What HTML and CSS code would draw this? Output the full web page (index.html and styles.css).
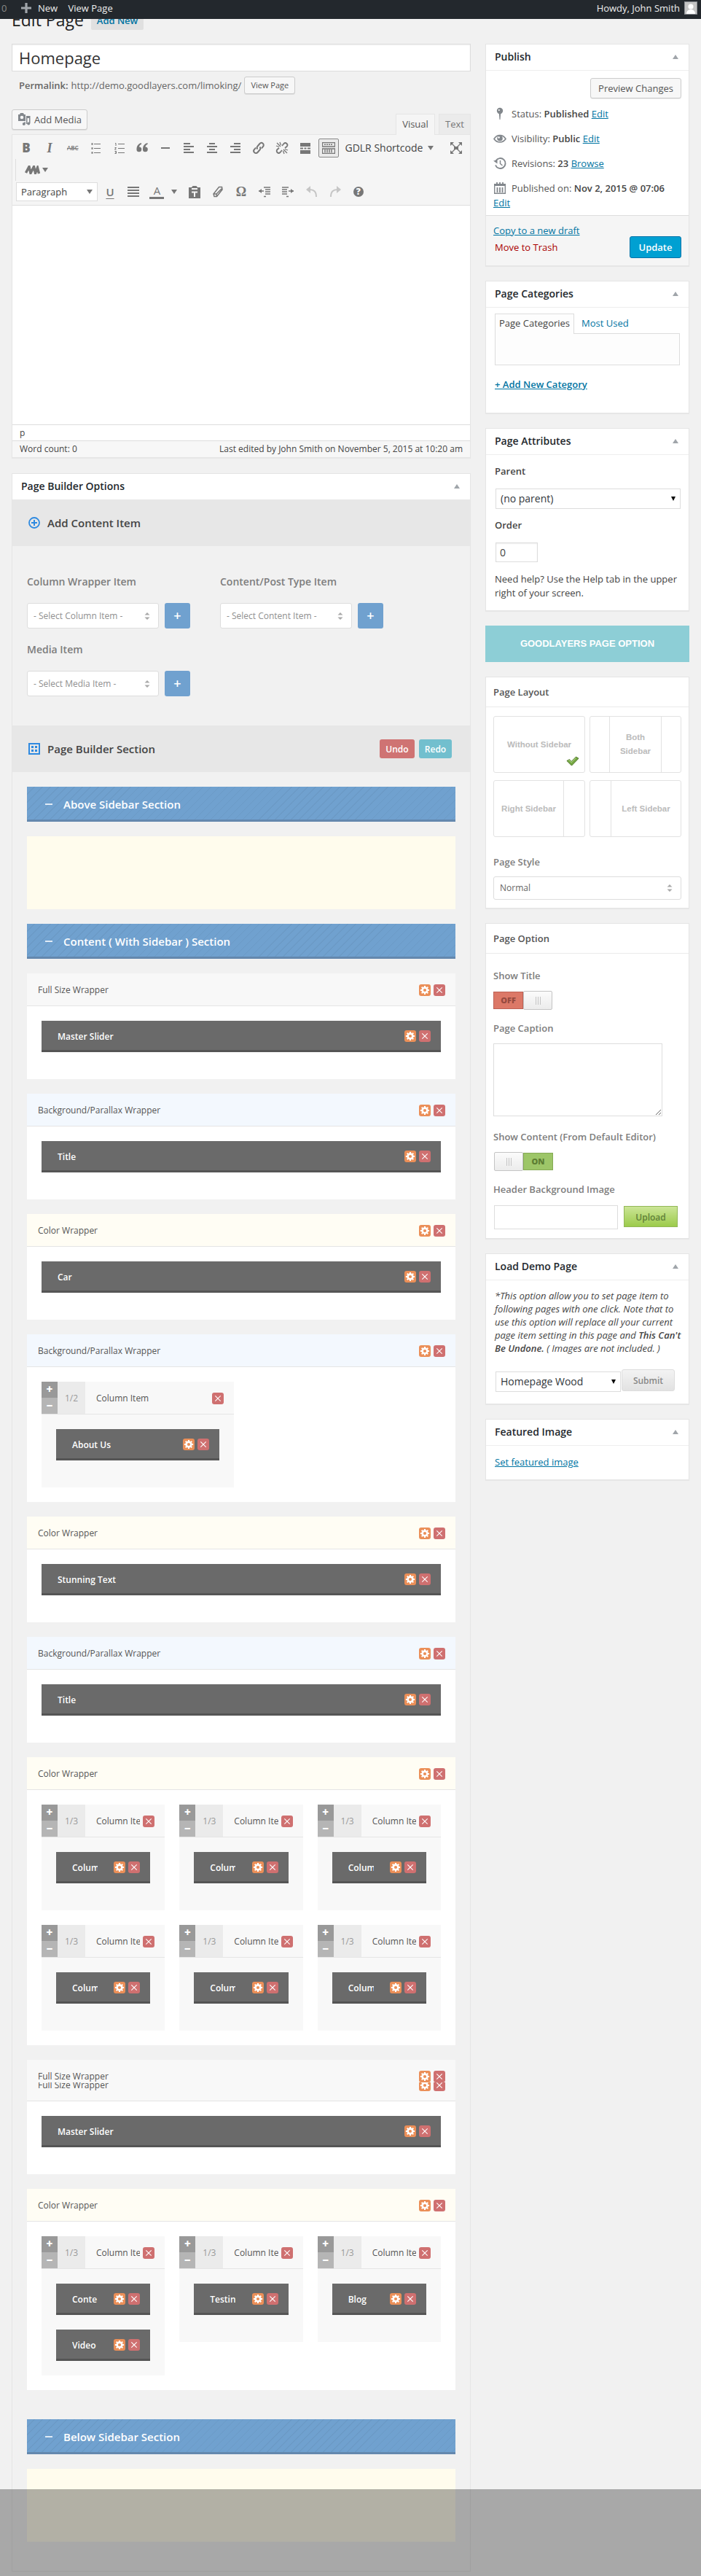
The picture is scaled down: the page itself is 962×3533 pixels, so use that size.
FILE: index.html
```html
<!DOCTYPE html>
<html lang="en">
<head>
    <meta charset="UTF-8">
    <meta name="viewport" content="width=device-width, initial-scale=1.0">
    <title>Edit Page</title>
    <link rel="stylesheet" href="styles.css">
</head>
<body>

    <svg class="sprite">
        <symbol id="gear" viewBox="0 0 16 16">
            <circle cx="8" cy="8" r="3.4" fill="none" stroke="#fff" stroke-width="2.6"/>
            <path d="M8 1.900v2M8 12.100v2M1.900 8h2M12.100 8h2M3.700 3.700l1.400 1.400M10.900 10.900l1.400 1.400M3.700 12.300l1.400-1.400M10.900 5.100l1.400-1.400" stroke="#fff" stroke-width="2"/>
        </symbol>
        <symbol id="cross" viewBox="0 0 16 16">
            <path d="M4.300 4.300l7.400 7.400M11.700 4.300l-7.400 7.400" stroke="#fff" stroke-width="1.100"/>
        </symbol>
        <symbol id="updown" viewBox="0 0 8 14">
            <path d="M0.500 5.500L4 2l3.500 3.500zM0.500 8.500h7L4 12z" fill="#a9a9a9"/>
        </symbol>
    </svg>

    <div class="adminbar">
        <span class="count">0</span>
        <svg class="plus-icon" width="14" height="14" viewBox="0 0 14 14"><path d="M7 0v14M0 7h14" stroke="#a0a5aa" stroke-width="3.200"/></svg>
        <span class="new">New</span>
        <span>View Page</span>
        <span class="howdy">Howdy, John Smith</span>
        <svg class="avatar" width="18" height="18" viewBox="0 0 18 18"><rect x=".5" y=".5" width="17" height="17" fill="#c4c4c4" stroke="#8c8f94"/><circle cx="9" cy="7" r="3.600" fill="#fff"/><path d="M3 17c0-4 3-6 6-6s6 2 6 6z" fill="#fff"/></svg>
    </div>

    <div class="page-heading">
        <h1>Edit Page</h1>
        <a class="add-new">Add New</a>
    </div>

    <div class="columns">
        <div class="main">
            <div class="title-input">Homepage</div>
            <div class="permalink">
                <b>Permalink:</b><span>http://demo.goodlayers.com/limoking/</span>
                <span class="btn btn-small">View Page</span>
            </div>

            <div class="editor-tools">
                <span class="btn btn-media">
                    <svg width="18" height="18" viewBox="0 0 18 18" fill="#82878c"><path d="M1 2h2l1-2h4l1 2h2v9H1z"/><circle cx="6" cy="6" r="2.300" fill="#f7f7f7"/><path d="M12 4h5.500v10h-1.500V7h-2.500v8H12z"/><circle cx="8.800" cy="15" r="2"/><circle cx="15.200" cy="14.500" r="2"/><path d="M9.500 12h1.300v3H9.500z"/></svg>
                    Add Media
                </span>
                <span class="tab active">Visual</span>
                <span class="tab">Text</span>
            </div>

            <div class="editor">
                <div class="toolbar">
                    <div class="tool-row">
                        <span class="tool"><b class="bold">B</b></span>
                        <span class="tool"><b class="ital">I</b></span>
                        <span class="tool"><s class="strike">ABC</s></span>
                        <span class="tool"><svg width="16" height="16" viewBox="0 0 16 16" stroke="#777"><path d="M5 2.500h9M5 8.500h9M5 14.500h9" /><path d="M1.500 2.500h2M1.500 8.500h2M1.500 14.500h2" stroke-width="2.500"/></svg></span>
                        <span class="tool"><svg width="16" height="16" viewBox="0 0 16 16" stroke="#777" fill="none"><path d="M6 2.500h9M6 8.500h9M6 14.500h9M2 1.500h1V5M1.500 7.500h2l-2 2.500h2M1.500 12.500h2v3h-2M2 14h1.500"/></svg></span>
                        <span class="tool"><svg width="16" height="14" viewBox="0 0 16 14" fill="#777"><path d="M7 0C3 1 .5 4 .5 8.500a3.400 3.400 0 1 0 3.500-3C4 4 5 2.500 7 2zM15.500 0C11.500 1 9 4 9 8.500a3.400 3.400 0 1 0 3.500-3c0-1.500 1-3 3-3.500z"/></svg></span>
                        <span class="tool"><svg width="14" height="14" viewBox="0 0 14 14" stroke="#777" stroke-width="2"><path d="M1 7h12"/></svg></span>
                        <span class="tool"><svg width="14" height="16" viewBox="0 0 14 16" stroke="#777" stroke-width="2"><path d="M0 2h9M0 6h14M0 10h9M0 14h14"/></svg></span>
                        <span class="tool"><svg width="14" height="16" viewBox="0 0 14 16" stroke="#777" stroke-width="2"><path d="M3 2h8M0 6h14M3 10h8M0 14h14"/></svg></span>
                        <span class="tool"><svg width="14" height="16" viewBox="0 0 14 16" stroke="#777" stroke-width="2"><path d="M5 2h9M0 6h14M5 10h9M0 14h14"/></svg></span>
                        <span class="tool"><svg width="18" height="18" viewBox="0 0 18 18" fill="none" stroke="#777" stroke-width="2"><path d="M7.500 10.500a2.800 2.800 0 0 1 0-4l3-3.500a2.800 2.800 0 0 1 4.500 4l-2 2.500M10.500 7.500a2.800 2.800 0 0 1 0 4l-3 3.500a2.800 2.800 0 0 1-4.500-4l2-2.500"/></svg></span>
                        <span class="tool"><svg width="18" height="18" viewBox="0 0 18 18" fill="none" stroke="#777" stroke-width="1.800"><path d="M9 6l2.500-3a2.600 2.600 0 0 1 4 4L13 9M9 12l-2.500 3a2.600 2.600 0 0 1-4-4L5 9"/><path d="M2 2l5 5M6 1l1.500 4M1 6l4 1.500M16 16l-5-5M12 17l-1.500-4M17 12l-4-1.500" stroke-width="1.300"/></svg></span>
                        <span class="tool"><svg width="14" height="15" viewBox="0 0 14 15" fill="#777"><path d="M0 0h14v5H0zM0 10h14v5H0zM0 6.500h4v2H0zM5.500 6.500h3v2h-3zM10 6.500h4v2h-4z"/></svg></span>
                        <span class="tool tool-on"><svg width="18" height="16" viewBox="0 0 18 16" fill="none" stroke="#777"><path d="M.5.500h17v5.500H.500zM.500 9h17v6.500H.500z" stroke-width="1.300"/><path d="M3 3.300h12M3 11h12M3 13.300h12" stroke-width="1.600" stroke-dasharray="2 1"/></svg></span>
                        <span class="shortcode">GDLR Shortcode <i class="down"></i></span>
                        <span class="tool expand"><svg width="16" height="16" viewBox="0 0 16 16" fill="#777"><path d="M0 0h5L0 5zM16 0v5l-5-5zM0 16v-5l5 5zM16 16h-5l5-5zM5 6h6v4H5z"/><path d="M2 2l12 12M14 2L2 14" stroke="#777" stroke-width="1.300"/></svg></span>
                    </div>
                    <div class="tool-row row-group">
                        <svg width="21" height="12" viewBox="0 0 21 12" fill="none" stroke="#777" stroke-width="3.400"><path d="M1.500 10L6 1.500 8 10.500 12.500 1.500 14.500 10.500 17.500 3 19.500 11"/></svg>
                        <i class="down"></i>
                    </div>
                    <div class="tool-row row-last">
                        <span class="format">Paragraph <i class="down"></i></span>
                        <span class="tool"><u class="under">U</u></span>
                        <span class="tool"><svg width="16" height="14" viewBox="0 0 16 14" stroke="#777" stroke-width="2"><path d="M0 1h16M0 5h16M0 9h16M0 13h16"/></svg></span>
                        <span class="tool color"><span>A</span></span>
                        <span class="tool caret"><i class="down"></i></span>
                        <span class="tool"><svg width="16" height="17" viewBox="0 0 16 17" fill="#777"><path d="M0 2h4l1.500-2h5L12 2h4v15H0z"/><path d="M4 4h8M4 8.500h8M8 8.500V15" stroke="#f5f5f5" stroke-width="2"/></svg></span>
                        <span class="tool"><svg width="16" height="16" viewBox="0 0 16 16" fill="none" stroke="#777" stroke-width="1.500"><path d="M2 11L9.500 1.500h4l.5 3.500L6.500 14.500H3zM2 11h4l.5 3.500M6 11l8-8"/></svg></span>
                        <span class="tool omega">Ω</span>
                        <span class="tool"><svg width="16" height="15" viewBox="0 0 16 15" stroke="#777" stroke-width="1.700"><path d="M7 1h9M9 4h7M9 7h7M9 10h7M7 13.500h3M0 6h7"/><path d="M4 3v6L0 6z" fill="#777" stroke="none"/></svg></span>
                        <span class="tool"><svg width="16" height="15" viewBox="0 0 16 15" stroke="#777" stroke-width="1.700"><path d="M0 1h9M0 4h7M0 7h7M0 10h7M6 13.500h3M9 6h7"/><path d="M12 3v6l4-3z" fill="#777" stroke="none"/></svg></span>
                        <span class="tool"><svg width="16" height="16" viewBox="0 0 16 16" fill="none" stroke="#c6c6c6" stroke-width="2"><path d="M4 5c7-.5 10 3 10 10"/><path d="M0 5l6-5v10z" fill="#c6c6c6" stroke="none"/></svg></span>
                        <span class="tool"><svg width="16" height="16" viewBox="0 0 16 16" fill="none" stroke="#c6c6c6" stroke-width="2"><path d="M12 5C5 4.500 2 8 2 15"/><path d="M16 5l-6-5v10z" fill="#c6c6c6" stroke="none"/></svg></span>
                        <span class="tool"><b class="help">?</b></span>
                    </div>
                </div>
                <div class="edit-area"></div>
                <div class="edit-path">p</div>
                <div class="edit-status"><span>Word count: 0</span><span>Last edited by John Smith on November 5, 2015 at 10:20 am</span></div>
            </div>

            <div class="builder">
                <div class="builder-head">Page Builder Options <i class="up"></i></div>
                <div class="band">
                    <svg width="16" height="16" viewBox="0 0 16 16" fill="none" stroke="#2f8ae0" stroke-width="1.800"><circle cx="8" cy="8" r="7"/><path d="M8 4v8M4 8h8" stroke-width="2"/></svg>
                    <span>Add Content Item</span>
                </div>
                <div class="add-items">
                    <div class="add-item">
                        <h4>Column Wrapper Item</h4>
                        <div class="add-row"><span class="combo">- Select Column Item -<svg width="8" height="14"><use href="#updown"/></svg></span><span class="add-btn">+</span></div>
                    </div>
                    <div class="add-item">
                        <h4>Content/Post Type Item</h4>
                        <div class="add-row"><span class="combo">- Select Content Item -<svg width="8" height="14"><use href="#updown"/></svg></span><span class="add-btn">+</span></div>
                    </div>
                    <div class="add-item">
                        <h4>Media Item</h4>
                        <div class="add-row"><span class="combo">- Select Media Item -<svg width="8" height="14"><use href="#updown"/></svg></span><span class="add-btn">+</span></div>
                    </div>
                </div>
                <div class="band">
                    <svg width="16" height="16" viewBox="0 0 16 16" fill="none" stroke="#2f8ae0" stroke-width="2"><path d="M1 1h14v14H1z"/><path d="M4 5.500h3M9 5.500h3M4 10.500h3M9 10.500h3" stroke-width="3"/></svg>
                    <span>Page Builder Section</span>
                    <span class="undo">Undo</span><span class="redo">Redo</span>
                </div>

                <div class="sections">
                    <div class="section-bar"><i></i>Above Sidebar Section</div>
                    <div class="drop-area"></div>
                    <div class="section-bar"><i></i>Content ( With Sidebar ) Section</div>

                    <div class="wrapper">
                        <div class="w-head"><span>Full Size Wrapper</span><svg class="ic gear"><use href="#gear"/></svg><svg class="ic del"><use href="#cross"/></svg></div>
                        <div class="w-body"><div class="item"><b>Master Slider</b><svg class="ic gear"><use href="#gear"/></svg><svg class="ic del"><use href="#cross"/></svg></div></div>
                    </div>
                    <div class="wrapper parallax">
                        <div class="w-head"><span>Background/Parallax Wrapper</span><svg class="ic gear"><use href="#gear"/></svg><svg class="ic del"><use href="#cross"/></svg></div>
                        <div class="w-body"><div class="item"><b>Title</b><svg class="ic gear"><use href="#gear"/></svg><svg class="ic del"><use href="#cross"/></svg></div></div>
                    </div>
                    <div class="wrapper color-w">
                        <div class="w-head"><span>Color Wrapper</span><svg class="ic gear"><use href="#gear"/></svg><svg class="ic del"><use href="#cross"/></svg></div>
                        <div class="w-body"><div class="item"><b>Car</b><svg class="ic gear"><use href="#gear"/></svg><svg class="ic del"><use href="#cross"/></svg></div></div>
                    </div>
                    <div class="wrapper parallax">
                        <div class="w-head"><span>Background/Parallax Wrapper</span><svg class="ic gear"><use href="#gear"/></svg><svg class="ic del"><use href="#cross"/></svg></div>
                        <div class="w-body halves">
                            <div class="col">
                                <div class="col-head"><div class="sizer"><i>+</i><i>−</i></div><em>1/2</em><span>Column Item</span><svg class="ic del"><use href="#cross"/></svg></div>
                                <div class="col-body"><div class="item"><b>About Us</b><svg class="ic gear"><use href="#gear"/></svg><svg class="ic del"><use href="#cross"/></svg></div></div>
                            </div>
                        </div>
                    </div>
                    <div class="wrapper color-w">
                        <div class="w-head"><span>Color Wrapper</span><svg class="ic gear"><use href="#gear"/></svg><svg class="ic del"><use href="#cross"/></svg></div>
                        <div class="w-body"><div class="item"><b>Stunning Text</b><svg class="ic gear"><use href="#gear"/></svg><svg class="ic del"><use href="#cross"/></svg></div></div>
                    </div>
                    <div class="wrapper parallax">
                        <div class="w-head"><span>Background/Parallax Wrapper</span><svg class="ic gear"><use href="#gear"/></svg><svg class="ic del"><use href="#cross"/></svg></div>
                        <div class="w-body"><div class="item"><b>Title</b><svg class="ic gear"><use href="#gear"/></svg><svg class="ic del"><use href="#cross"/></svg></div></div>
                    </div>
                    <div class="wrapper color-w">
                        <div class="w-head"><span>Color Wrapper</span><svg class="ic gear"><use href="#gear"/></svg><svg class="ic del"><use href="#cross"/></svg></div>
                        <div class="w-body thirds">
                            <div class="col">
                                <div class="col-head"><div class="sizer"><i>+</i><i>−</i></div><em>1/3</em><span>Column Item</span><svg class="ic del"><use href="#cross"/></svg></div>
                                <div class="col-body"><div class="item"><b>Column</b><svg class="ic gear"><use href="#gear"/></svg><svg class="ic del"><use href="#cross"/></svg></div></div>
                            </div>
                            <div class="col">
                                <div class="col-head"><div class="sizer"><i>+</i><i>−</i></div><em>1/3</em><span>Column Item</span><svg class="ic del"><use href="#cross"/></svg></div>
                                <div class="col-body"><div class="item"><b>Column</b><svg class="ic gear"><use href="#gear"/></svg><svg class="ic del"><use href="#cross"/></svg></div></div>
                            </div>
                            <div class="col">
                                <div class="col-head"><div class="sizer"><i>+</i><i>−</i></div><em>1/3</em><span>Column Item</span><svg class="ic del"><use href="#cross"/></svg></div>
                                <div class="col-body"><div class="item"><b>Column</b><svg class="ic gear"><use href="#gear"/></svg><svg class="ic del"><use href="#cross"/></svg></div></div>
                            </div>
                            <div class="col">
                                <div class="col-head"><div class="sizer"><i>+</i><i>−</i></div><em>1/3</em><span>Column Item</span><svg class="ic del"><use href="#cross"/></svg></div>
                                <div class="col-body"><div class="item"><b>Column</b><svg class="ic gear"><use href="#gear"/></svg><svg class="ic del"><use href="#cross"/></svg></div></div>
                            </div>
                            <div class="col">
                                <div class="col-head"><div class="sizer"><i>+</i><i>−</i></div><em>1/3</em><span>Column Item</span><svg class="ic del"><use href="#cross"/></svg></div>
                                <div class="col-body"><div class="item"><b>Column</b><svg class="ic gear"><use href="#gear"/></svg><svg class="ic del"><use href="#cross"/></svg></div></div>
                            </div>
                            <div class="col">
                                <div class="col-head"><div class="sizer"><i>+</i><i>−</i></div><em>1/3</em><span>Column Item</span><svg class="ic del"><use href="#cross"/></svg></div>
                                <div class="col-body"><div class="item"><b>Column</b><svg class="ic gear"><use href="#gear"/></svg><svg class="ic del"><use href="#cross"/></svg></div></div>
                            </div>
                        </div>
                    </div>
                    <div class="wrapper">
                        <div class="w-head w-cut"><span>Full Size Wrapper</span><svg class="ic gear"><use href="#gear"/></svg><svg class="ic del"><use href="#cross"/></svg></div>
                        <div class="w-head w-rest"><span>Full Size Wrapper</span><svg class="ic gear"><use href="#gear"/></svg><svg class="ic del"><use href="#cross"/></svg></div>
                        <div class="w-body"><div class="item"><b>Master Slider</b><svg class="ic gear"><use href="#gear"/></svg><svg class="ic del"><use href="#cross"/></svg></div></div>
                    </div>
                    <div class="wrapper color-w">
                        <div class="w-head"><span>Color Wrapper</span><svg class="ic gear"><use href="#gear"/></svg><svg class="ic del"><use href="#cross"/></svg></div>
                        <div class="w-body thirds">
                            <div class="col">
                                <div class="col-head"><div class="sizer"><i>+</i><i>−</i></div><em>1/3</em><span>Column Item</span><svg class="ic del"><use href="#cross"/></svg></div>
                                <div class="col-body">
                                    <div class="item"><b>Conte</b><svg class="ic gear"><use href="#gear"/></svg><svg class="ic del"><use href="#cross"/></svg></div>
                                    <div class="item"><b>Video</b><svg class="ic gear"><use href="#gear"/></svg><svg class="ic del"><use href="#cross"/></svg></div>
                                </div>
                            </div>
                            <div class="col">
                                <div class="col-head"><div class="sizer"><i>+</i><i>−</i></div><em>1/3</em><span>Column Item</span><svg class="ic del"><use href="#cross"/></svg></div>
                                <div class="col-body"><div class="item"><b>Testin</b><svg class="ic gear"><use href="#gear"/></svg><svg class="ic del"><use href="#cross"/></svg></div></div>
                            </div>
                            <div class="col">
                                <div class="col-head"><div class="sizer"><i>+</i><i>−</i></div><em>1/3</em><span>Column Item</span><svg class="ic del"><use href="#cross"/></svg></div>
                                <div class="col-body"><div class="item"><b>Blog</b><svg class="ic gear"><use href="#gear"/></svg><svg class="ic del"><use href="#cross"/></svg></div></div>
                            </div>
                        </div>
                    </div>
                    <div class="section-bar last"><i></i>Below Sidebar Section</div>
                    <div class="drop-area"></div>
                </div>
            </div>
        </div>

        <div class="side">
            <div class="box publish">
                <h2>Publish <i class="up"></i></h2>
                <div class="preview"><span class="btn">Preview Changes</span></div>
                <div class="misc">
                    <svg width="18" height="18" viewBox="0 0 18 18" fill="#82878c"><circle cx="9" cy="5" r="4.200"/><path d="M7.800 8h2.400L9.500 17h-1z"/><circle cx="7.800" cy="4" r="1" fill="#fff"/></svg>
                    <span>Status: <b>Published</b> <a>Edit</a></span>
                </div>
                <div class="misc">
                    <svg width="18" height="18" viewBox="0 0 18 18" fill="none" stroke="#82878c" stroke-width="1.600"><path d="M1 9.500c4-6.500 12-6.500 16 0-4 6-12 6-16 0z"/><circle cx="9" cy="8.800" r="3.800" fill="#82878c" stroke="none"/><circle cx="7.600" cy="7.500" r="1.300" fill="#fff" stroke="none"/></svg>
                    <span>Visibility: <b>Public</b> <a>Edit</a></span>
                </div>
                <div class="misc">
                    <svg width="18" height="18" viewBox="0 0 18 18" fill="none" stroke="#82878c" stroke-width="1.900"><path d="M3.500 5.500a7 7 0 1 1-.5 6"/><path d="M9.500 5v4.500l3 2.500" stroke-width="1.500"/><path d="M0 5.500l5.500-1v5z" fill="#82878c" stroke="none"/></svg>
                    <span>Revisions: <b>23</b> <a>Browse</a></span>
                </div>
                <div class="misc wide">
                    <svg width="18" height="18" viewBox="0 0 18 18" fill="none" stroke="#82878c" stroke-width="1.400"><path d="M1.700 3.700h14.600v12.600H1.700z"/><path d="M1 4.500h16" stroke-width="3"/><path d="M5.500 8v7M9 8v7M12.500 8v7M5 1v4M9 1v4M13 1v4" stroke-width="1.800"/></svg>
                    <span>Published on: <b>Nov 2, 2015 @ 07:06</b></span>
                </div>
                <div class="misc-edit"><a>Edit</a></div>
                <div class="actions">
                    <div><a>Copy to a new draft</a><span class="trash">Move to Trash</span></div>
                    <span class="update">Update</span>
                </div>
            </div>

            <div class="box cats">
                <h2>Page Categories <i class="up"></i></h2>
                <div class="cat-tabs"><span class="cat-on">Page Categories</span><span class="cat-off">Most Used</span></div>
                <div class="cat-list"></div>
                <a class="add-cat">+ Add New Category</a>
            </div>

            <div class="box attrs">
                <h2>Page Attributes <i class="up"></i></h2>
                <b>Parent</b>
                <div class="select">(no parent) <i class="down"></i></div>
                <b>Order</b>
                <div class="order">0</div>
                <p>Need help? Use the Help tab in the upper right of your screen.</p>
            </div>

            <div class="banner">GOODLAYERS PAGE OPTION</div>

            <div class="box layout">
                <h3>Page Layout</h3>
                <div class="layouts">
                    <div class="lay"><span>Without Sidebar</span>
                        <svg class="check" width="18" height="14" viewBox="0 0 18 14"><path d="M1 6.500l3.500-2L7 7.500 13.500 1 17 3.200 7.500 13z" fill="#76a843" stroke="#4b7426"/><path d="M3 6.200l1.400-.8L7 8.700 13.600 2.200" fill="none" stroke="#b5d88e"/></svg>
                    </div>
                    <div class="lay both"><i></i><span>Both<br>Sidebar</span><i></i></div>
                    <div class="lay right"><span>Right Sidebar</span><i></i></div>
                    <div class="lay left"><i></i><span>Left Sidebar</span></div>
                </div>
                <h4>Page Style</h4>
                <div class="combo">Normal<svg width="8" height="14"><use href="#updown"/></svg></div>
            </div>

            <div class="box option">
                <h3>Page Option</h3>
                <h4 class="o-title">Show Title</h4>
                <div class="switch"><b class="off">OFF</b><i><u></u></i></div>
                <h4 class="o-caption">Page Caption</h4>
                <textarea class="caption"></textarea>
                <h4 class="o-content">Show Content (From Default Editor)</h4>
                <div class="switch sw-on"><i><u></u></i><b class="on">ON</b></div>
                <h4 class="o-header">Header Background Image</h4>
                <div class="upload-row"><span class="upload-input"></span><span class="upload">Upload</span></div>
            </div>

            <div class="box demo">
                <h2>Load Demo Page <i class="up"></i></h2>
                <p>*This option allow you to set page item to<br>following pages with one click. Note that to<br>use this option will replace all your current<br>page item setting in this page and <b>This Can't<br>Be Undone.</b> ( Images are not included. )</p>
                <div class="demo-row"><div class="select">Homepage Wood <i class="down"></i></div><span class="submit">Submit</span></div>
            </div>

            <div class="box featured">
                <h2>Featured Image <i class="up"></i></h2>
                <a>Set featured image</a>
            </div>
        </div>
    </div>
    <div class="shade"></div>

</body>
</html>
```
FILE: styles.css
```css
* {
    margin: 0;
    padding: 0;
    box-sizing: border-box;
}
body {
    position: relative;
    width: 962px;
    height: 3533px;
    overflow: hidden;
    background: #f1f1f1;
    font-family: 'Open Sans', sans-serif;
    font-size: 13px;
    line-height: 18px;
    color: #444;
}
.sprite {
    display: none;
}
b {
    font-weight: 600;
}
i, em {
    font-style: normal;
}
svg {
    flex: none;
}
a {
    color: #0074a2;
    text-decoration: underline;
}
.up {
    width: 0;
    height: 0;
    border: 4px solid transparent;
    border-top: 0;
    border-bottom: 6px solid #a0a5aa;
}
.down {
    width: 0;
    height: 0;
    border: 4px solid transparent;
    border-bottom: 0;
    border-top: 6px solid #777;
}

/* admin bar */
.adminbar {
    display: flex;
    align-items: center;
    height: 26px;
    padding: 0 5px 5px 2px;
    background: #23282d;
    color: #eee;
}
.adminbar .count {
    width: 27px;
    color: #888;
}
.plus-icon {
    margin-right: 9px;
}
.adminbar .new {
    width: 41.500px;
}
.howdy {
    margin-left: auto;
    margin-right: 6px;
}
.page-heading {
    display: flex;
    height: 34px;
    padding-left: 16px;
    overflow: hidden;
}
.page-heading h1 {
    margin-top: -14px;
    width: 109px;
    height: 32px;
    font-size: 23px;
    font-weight: 400;
    line-height: 30px;
    color: #222;
}
.add-new {
    height: 25px;
    width: 72px;
    margin-top: -10px;
    padding-top: 3px;
    background: #e0e0e0;
    border-radius: 2px;
    font-weight: 600;
    text-align: center;
    text-decoration: none;
}
.columns {
    display: flex;
    gap: 20px;
    padding-left: 16px;
}
.main {
    width: 630px;
}
.side {
    width: 280px;
}
.title-input {
    height: 38px;
    padding: 0 9px;
    border: 1px solid #ddd;
    background: #fff;
    box-shadow: inset 0 1px 2px rgba(0,0,0,.07);
    font-size: 22px;
    line-height: 37px;
    color: #333;
}
.permalink {
    display: flex;
    align-items: center;
    height: 24px;
    margin-top: 7px;
    padding-left: 10px;
    color: #666;
}
.permalink b {
    margin-right: 4px;
}
.btn {
    display: flex;
    align-items: center;
    justify-content: center;
    height: 28px;
    border: 1px solid #ccc;
    border-radius: 3px;
    background: #f7f7f7;
    box-shadow: 0 1px 0 rgba(0,0,0,.08);
    color: #555;
}
.btn-small {
    width: 70px;
    height: 24px;
    margin-left: 4px;
    font-size: 11px;
}
.editor-tools {
    display: flex;
    align-items: flex-end;
    height: 34px;
    margin-top: 21px;
}
.btn-media {
    width: 104px;
    gap: 5px;
    margin-right: auto;
    margin-bottom: 6px;
}
.tab {
    width: 44px;
    height: 28px;
    border: 1px solid #e5e5e5;
    border-bottom: 0;
    background: #ebebeb;
    color: #777;
    line-height: 27px;
    text-align: center;
}
.tab.active {
    position: relative;
    width: 54px;
    height: 29px;
    margin-right: 5px;
    margin-bottom: -1px;
    background: #f5f5f5;
    color: #555;
}

/* editor */
.editor {
    height: 444px;
    border: 1px solid #e5e5e5;
    background: #fff;
    box-shadow: 0 1px 1px rgba(0,0,0,.04);
}
.toolbar {
    height: 97px;
    padding-top: 3px;
    border-bottom: 1px solid #ddd;
    background: #f5f5f5;
}
.tool-row {
    display: flex;
    align-items: center;
    height: 30px;
    padding-left: 5px;
}
.tool {
    display: flex;
    align-items: center;
    justify-content: center;
    width: 28px;
    height: 26px;
    margin-right: 3.900px;
    color: #777;
}
.tool-on {
    border: 1px solid #888;
    border-radius: 2px;
    background: #ebebeb;
}
.bold {
    font-size: 17px;
    font-weight: 800;
}
.ital {
    font: italic bold 18px 'Liberation Serif', serif;
}
.strike {
    font-size: 8px;
    font-weight: 600;
}
.shortcode {
    display: flex;
    align-items: center;
    justify-content: space-between;
    width: 122px;
    margin-left: 5px;
    font-size: 14px;
    color: #444;
}
.expand {
    margin-left: 17px;
    margin-right: 0;
}
.row-group {
    margin-left: 4px;
    padding-left: 12px;
    border-left: 1px solid #ddd;
    gap: 3px;
}
.row-last .tool {
    margin-right: 4.200px;
}
.format {
    display: flex;
    align-items: center;
    justify-content: space-between;
    width: 112px;
    height: 26px;
    margin-right: 3px;
    padding: 0 6px;
    border: 1px solid #ddd;
    background: #fff;
}
.under {
    font-size: 15px;
    font-weight: 600;
    text-underline-offset: 3px;
}
.color span {
    width: 20px;
    height: 19px;
    border-bottom: 3px solid #777;
    font-size: 15px;
    line-height: 15px;
    text-align: center;
}
.row-last .caret {
    width: 14px;
    margin-right: 0;
    margin-left: -2px;
}
.caret + .tool {
    margin-left: 7px;
}
.omega {
    font: bold 18px 'Liberation Serif', serif;
}
.help {
    width: 14px;
    height: 14px;
    border-radius: 50%;
    background: #777;
    color: #fff;
    font-size: 12px;
    font-weight: 800;
    line-height: 14px;
    text-align: center;
}
.edit-area {
    height: 300px;
}
.edit-path {
    height: 23px;
    padding-left: 10px;
    border-top: 1px solid #ddd;
    border-bottom: 1px solid #ddd;
    font-size: 12px;
    line-height: 22px;
}
.edit-status {
    display: flex;
    justify-content: space-between;
    height: 22px;
    padding: 0 10px;
    background: #f7f7f7;
    font-size: 12px;
    line-height: 22px;
}

/* page builder */
.builder {
    height: 2878px;
    margin-top: 21px;
    border: 1px solid #e5e5e5;
}
.builder-head {
    display: flex;
    align-items: center;
    justify-content: space-between;
    height: 35px;
    padding: 0 14px 1px 12px;
    background: #fff;
    font-size: 14px;
    font-weight: 600;
    color: #23282d;
}
.band {
    display: flex;
    align-items: center;
    height: 64px;
    padding: 0 25px 0 22px;
    background: #e7e7e7;
    font-size: 15px;
    font-weight: 600;
}
.band svg {
    margin-right: 10px;
}
.undo, .redo {
    height: 26px;
    width: 48px;
    border-radius: 3px;
    background: #cf7373;
    color: #fff;
    font-size: 12px;
    font-weight: 600;
    line-height: 27px;
    text-align: center;
}
.undo {
    margin-left: auto;
}
.redo {
    width: 45px;
    margin-left: 6px;
    background: #72bfce;
}
.add-items {
    display: flex;
    flex-wrap: wrap;
    align-content: flex-start;
    height: 246px;
    padding: 38px 0 0 20px;
}
.add-item {
    width: 265px;
    height: 93px;
}
.add-item h4 {
    height: 40px;
    font-size: 14px;
    font-weight: 600;
    line-height: 22px;
    color: #7d7d7d;
}
.add-row {
    display: flex;
    gap: 8px;
}
.combo {
    display: flex;
    align-items: center;
    justify-content: space-between;
    width: 181px;
    height: 35px;
    padding: 0 11px 0 8px;
    border: 1px solid #ddd;
    border-radius: 3px;
    background: #fff;
    font-size: 12px;
    color: #8f8f8f;
}
.add-btn {
    width: 35px;
    height: 35px;
    border-radius: 3px;
    background: #70a1cf;
    color: #fff;
    font-size: 18px;
    font-weight: 600;
    line-height: 34px;
    text-align: center;
}
.sections {
    padding: 20px;
}
.section-bar {
    display: flex;
    align-items: center;
    height: 48px;
    margin-bottom: 20px;
    padding: 3px 0 0 25px;
    border-bottom: 3px solid #6488ae;
    background: #70a1cf repeating-linear-gradient(135deg, transparent 0 6.800px, rgba(0,0,0,.045) 6.800px 7.800px);
    color: #fff;
    font-size: 15px;
    font-weight: 600;
}
.section-bar i {
    width: 10px;
    height: 2px;
    margin: -1px 15px 0 0;
    background: #dfeaf5;
}
.section-bar.last {
    margin-top: 40px;
}
.drop-area {
    height: 100px;
    margin-bottom: 20px;
    background: #fffced;
}
.wrapper {
    margin-bottom: 20px;
    background: #fff;
}
.w-head {
    display: flex;
    align-items: center;
    height: 45px;
    padding: 2px 14px 0 15px;
    border-bottom: 1px solid #e5e5e5;
    background: #f8f8f8;
    font-size: 12px;
    color: #555;
}
.w-head .gear {
    margin-left: auto;
}
.parallax .w-head {
    background: #f3f8fe;
}
.color-w .w-head {
    background: #fffdf4;
}
.w-cut {
    height: 31px;
    align-items: flex-start;
    padding-top: 15px;
    border-bottom: 0;
    line-height: 16px;
}
.w-rest {
    height: 26px;
    align-items: flex-start;
    padding-top: 0;
    overflow: hidden;
    line-height: 16px;
}
.w-rest > * {
    margin-top: -4px;
}
.ic {
    width: 16px;
    height: 16px;
    border-radius: 3px;
}
.gear {
    margin-right: 4px;
    background: #eb8f58;
}
.del {
    background: #cf7070;
}
.w-body {
    min-height: 100px;
    padding: 20px;
}
.item {
    display: flex;
    align-items: center;
    height: 43px;
    padding: 2px 14px 0 22px;
    border-bottom: 3px solid #555;
    background: #6a6a6a;
    color: #fff;
    font-size: 12px;
}
.item b {
    padding-top: 1px;
    font-weight: 600;
}
.item .gear {
    margin-left: auto;
}
.halves, .thirds {
    display: grid;
    align-items: start;
    gap: 20px;
}
.halves {
    grid-template-columns: 264px;
}
.thirds {
    grid-template-columns: repeat(3, 1fr);
}
.col {
    background: #f8f8f8;
    min-width: 0;
}
.col-head {
    display: flex;
    align-items: center;
    height: 45px;
    padding-right: 14px;
    border-bottom: 1px solid #e5e5e5;
    font-size: 12px;
    color: #555;
}
.sizer i {
    display: block;
    width: 22px;
    height: 22px;
    background: #999;
    color: #fff;
    font-size: 15px;
    font-weight: 800;
    line-height: 21px;
    text-align: center;
}
.sizer i + i {
    background: #b5b5b5;
}
.col-head em {
    width: 38px;
    height: 44px;
    background: #ebebeb;
    color: #999;
    line-height: 46px;
    text-align: center;
}
.col-head span {
    flex: 1;
    margin: 2px 4px 0 15px;
    overflow: hidden;
    white-space: nowrap;
}
.col-head .del {
    margin-top: 2px;
}
.col-body {
    display: flex;
    flex-direction: column;
    gap: 20px;
    min-height: 100px;
    padding: 20px;
}
.thirds .item b {
    width: 35px;
    overflow: hidden;
}

/* sidebar boxes */
.box {
    margin-bottom: 20px;
    border: 1px solid #e5e5e5;
    background: #fff;
    box-shadow: 0 1px 1px rgba(0,0,0,.04);
}
.box h2 {
    display: flex;
    align-items: center;
    justify-content: space-between;
    height: 36px;
    padding: 0 14px 1px 12px;
    border-bottom: 1px solid #eee;
    font-size: 14px;
    font-weight: 600;
    color: #23282d;
}
.box h3 {
    height: 41px;
    padding-left: 10px;
    border-bottom: 1px solid #eaeaea;
    font-size: 13px;
    font-weight: 600;
    line-height: 40px;
    color: #555;
}
.box h4 {
    padding-left: 10px;
    font-size: 13px;
    font-weight: 600;
    color: #7d7d7d;
}
.publish {
    height: 305px;
}
.preview {
    display: flex;
    justify-content: flex-end;
    height: 42px;
    padding: 10px 10px 0;
}
.preview .btn {
    width: 125px;
}
.misc {
    display: flex;
    align-items: center;
    gap: 7px;
    height: 34px;
    padding-left: 10px;
    color: #555;
}
.misc span {
    margin-top: -1px;
}
.misc b {
    color: #444;
}
.misc-edit {
    height: 19px;
    margin-top: -6px;
    padding-left: 10px;
}
.actions {
    display: flex;
    justify-content: space-between;
    height: 69px;
    margin-top: 7px;
    padding: 11px 10px 0;
    border-top: 1px solid #ddd;
    background: #f5f5f5;
}
.actions div {
    display: flex;
    flex-direction: column;
    gap: 5px;
}
.trash {
    padding-left: 2px;
    color: #a00;
}
.update {
    width: 71px;
    height: 30px;
    margin-top: 17px;
    border: 1px solid #0073aa;
    border-radius: 3px;
    background: #00a0d2;
    color: #fff;
    font-weight: 600;
    line-height: 29px;
    text-align: center;
}
.cats {
    height: 182px;
}
.cat-tabs {
    display: flex;
    height: 27px;
    margin: 8px 0 0 12px;
}
.cat-on {
    height: 28px;
    width: 109px;
    border: 1px solid #ddd;
    border-bottom: 0;
    background: #fdfdfd;
    line-height: 25px;
    text-align: center;
    z-index: 1;
}
.cat-off {
    margin-left: 10px;
    line-height: 27px;
    color: #0074a2;
}
.cat-list {
    width: 254px;
    height: 44px;
    margin-left: 12px;
    border: 1px solid #ddd;
    background: #fdfdfd;
}
.add-cat {
    display: block;
    padding: 17px 0 0 12px;
    font-weight: 600;
}
.attrs {
    height: 251px;
}
.attrs > b {
    display: block;
    height: 18px;
    margin: 13px 0 15px 12px;
}
.select {
    display: flex;
    align-items: center;
    justify-content: space-between;
    width: 254px;
    height: 28px;
    margin-left: 13px;
    padding: 0 6px;
    border: 1px solid #ddd;
    font-size: 14px;
    color: #32373c;
}
.select .down {
    border-width: 6px 3px 0;
    border-top-color: #000;
}
.order {
    width: 58px;
    height: 27px;
    margin-left: 13px;
    padding-left: 5px;
    border: 1px solid #ddd;
    box-shadow: inset 0 1px 2px rgba(0,0,0,.07);
    font-size: 14px;
    line-height: 26px;
}
.attrs p {
    padding: 14px 12px 0;
    line-height: 19px;
}
.banner {
    height: 50px;
    margin-bottom: 20px;
    background: #8dced6;
    color: #fff;
    font: bold 13px/49px 'Liberation Sans', sans-serif;
    text-align: center;
}
.layout {
    height: 318px;
}
.layouts {
    display: grid;
    grid-template-columns: 126px 126px;
    gap: 10px 6px;
    padding: 12px 10px 0;
}
.lay {
    position: relative;
    display: flex;
    align-items: center;
    height: 78px;
    border: 1px solid #e2e2e2;
    border-radius: 3px;
    color: #bbb;
    font: bold 11.500px/19px 'Liberation Sans', sans-serif;
    text-align: center;
}
.lay span {
    flex: 1;
}
.lay i {
    width: 29px;
    height: 76px;
    border: solid #e2e2e2;
    border-width: 0 0 0 1px;
}
.lay i:first-child {
    border-width: 0 1px 0 0;
}
.lay.both i {
    width: 27px;
}
.check {
    position: absolute;
    right: 7px;
    bottom: 8px;
}
.layout h4 {
    margin: 25px 0 11px;
}
.layout .combo {
    width: 258px;
    height: 32px;
    margin-left: 10px;
    color: #666;
}
.option {
    height: 433px;
}
.o-title {
    margin: 21px 0 12px;
}
.switch {
    display: flex;
    height: 26px;
    margin-left: 10px;
}
.switch b {
    width: 41px;
    height: 24px;
    margin-top: 1px;
    border: 1px solid #bd6155;
    background: #dc7867;
    font-size: 11px;
    font-weight: 800;
    line-height: 22px;
    text-align: center;
    color: #964a3f;
}
.switch .on {
    border-color: #85aa55;
    background: #9dc668;
    color: #5c7d33;
}
.switch i {
    width: 40px;
    height: 26px;
    padding: 7px 0 0 16px;
    border: 1px solid #c4c4c4;
    border-radius: 2px;
    background: linear-gradient(#fbfbfb, #ececec);
}
.switch u {
    display: block;
    width: 7px;
    height: 11px;
    background: repeating-linear-gradient(90deg, #c4c4c4 0 1px, transparent 1px 3px);
}
.sw-on {
    margin-left: 11px;
}
.o-caption {
    margin: 16px 0 12px;
}
.caption {
    display: block;
    width: 232px;
    height: 100px;
    margin-left: 10px;
    border: 1px solid #ddd;
    background: #fff;
    resize: both;
}
.o-content {
    margin: 19px 0 12px;
}
.o-header {
    margin: 16px 0 13px;
}
.upload-row {
    display: flex;
    gap: 8px;
    padding-left: 11px;
}
.upload-input {
    width: 170px;
    height: 33px;
    border: 1px solid #ddd;
}
.upload {
    width: 74px;
    height: 29px;
    margin-top: 1px;
    border: 1px solid #92b757;
    background: linear-gradient(#cbe596, #9ccb4b);
    color: #61813a;
    font-size: 12px;
    font-weight: 600;
    line-height: 29px;
    text-align: center;
}
.demo {
    height: 207px;
}
.demo p {
    height: 90px;
    margin: 12px 0 23px 12px;
    font-style: italic;
    font-size: 13px;
    line-height: 18px;
    white-space: nowrap;
}
.demo-row {
    display: flex;
    gap: 1px;
}
.demo .select {
    width: 172px;
}
.submit {
    width: 73px;
    height: 30px;
    margin-top: -3px;
    border: 1px solid #ddd;
    border-radius: 3px;
    background: linear-gradient(#f3f3f3, #e2e2e2);
    color: #888;
    font-size: 12px;
    font-weight: 600;
    line-height: 29px;
    text-align: center;
}
.featured {
    height: 84px;
}
.featured a {
    display: inline-block;
    margin: 13px 0 0 12px;
}

/* dimmed strip at the bottom of the window */
.shade {
    position: absolute;
    left: 0;
    right: 0;
    bottom: 0;
    height: 119px;
    background: rgba(0,0,0,.3);
}
```
